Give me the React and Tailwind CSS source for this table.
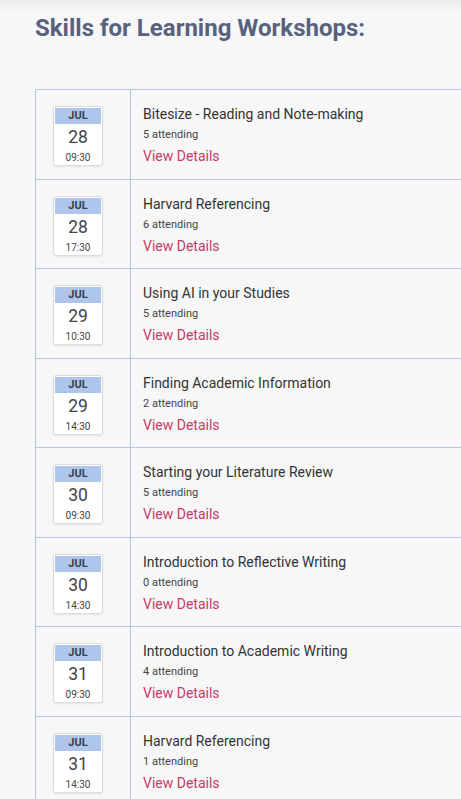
const workshops = [
  { month: 'JUL', day: 28, time: '09:30', title: 'Bitesize - Reading and Note-making', attending: 5 },
  { month: 'JUL', day: 28, time: '17:30', title: 'Harvard Referencing', attending: 6 },
  { month: 'JUL', day: 29, time: '10:30', title: 'Using AI in your Studies', attending: 5 },
  { month: 'JUL', day: 29, time: '14:30', title: 'Finding Academic Information', attending: 2 },
  { month: 'JUL', day: 30, time: '09:30', title: 'Starting your Literature Review', attending: 5 },
  { month: 'JUL', day: 30, time: '14:30', title: 'Introduction to Reflective Writing', attending: 0 },
  { month: 'JUL', day: 31, time: '09:30', title: 'Introduction to Academic Writing', attending: 4 },
  { month: 'JUL', day: 31, time: '14:30', title: 'Harvard Referencing', attending: 1 },
]

function DateCard({ month, day, time }) {
  return (
    <div className="w-[50px] h-[60px] bg-white border border-[#dcdcdc] rounded-[3px] shadow-[0_1px_2px_rgba(0,0,0,0.08)] flex flex-col items-center overflow-hidden">
      <div className="w-[46px] mt-[1px] h-[16px] bg-[#aec6ec] text-[11px] font-bold text-[#3a3f4a] leading-[16px] text-center">
        {month}
      </div>
      <div className="text-[17.5px] leading-[24px] text-[#444] mt-[1px]">{day}</div>
      <div className="text-[10px] leading-[14px] text-[#444] mt-[2px]">{time}</div>
    </div>
  )
}

export default function App() {
  return (
    <div className="min-h-[799px] bg-[#f7f7f7] font-['Roboto',sans-serif] relative overflow-hidden">
      <div className="absolute top-0 left-0 right-0 h-[12px] bg-gradient-to-b from-[#ececec] to-[#f7f7f7]" />
      <div className="relative pl-[35px] pt-[14px]">
        <h1 className="text-[24px] font-bold text-[#57627e] leading-[28px]">
          Skills for Learning Workshops:
        </h1>

        {/* Workshop list */}
        <div className="mt-[47px] w-[460px] border-l border-t border-[#b9c5d9]">
          {workshops.map((w, i) => (
            <div key={i} className="flex h-[89.5px] border-b border-[#b9c5d9]">
              <div className="w-[95px] shrink-0 border-r border-[#b9c5d9] pl-[17px] pt-[16px]">
                <DateCard month={w.month} day={w.day} time={w.time} />
              </div>
              <div className="pl-[12px] pt-[14px]">
                <div className="text-[14px] leading-[20px] text-[#333]">{w.title}</div>
                <div className="text-[11px] leading-[14px] text-[#444] mt-[4px]">{w.attending} attending</div>
                <a className="block text-[14px] leading-[20px] text-[#c73a68] mt-[4px] cursor-pointer">View Details</a>
              </div>
            </div>
          ))}
        </div>
      </div>
    </div>
  )
}
